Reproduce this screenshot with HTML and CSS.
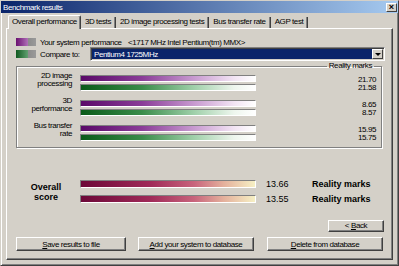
FILE: index.html
```html
<!DOCTYPE html>
<html lang="en">
<head>
  <meta charset="UTF-8">
  <title>Benchmark results</title>
  <link rel="stylesheet" href="styles.css">
</head>
<body>
  <div class="window">
    <div class="titlebar">
      <span>Benchmark results</span>
      <span class="close">&#215;</span>
    </div>

    <div class="content">
      <div class="tabs">
        <div class="tab active">Overall performance</div>
        <div class="tab">3D tests</div>
        <div class="tab">2D image processing tests</div>
        <div class="tab">Bus transfer rate</div>
        <div class="tab">AGP test</div>
      </div>

      <div class="panel">
        <div class="legend">
          <span class="swatch purple"></span>
          <span class="legend-label">Your system performance</span>
          <span>&lt;1717 MHz Intel Pentium(tm) MMX&gt;</span>
        </div>
        <div class="legend compare">
          <span class="swatch green"></span>
          <span class="legend-label short">Compare to:</span>
          <div class="select">
            <span class="select-text">Pentium4 1725MHz</span>
            <span class="select-btn"></span>
          </div>
        </div>

        <fieldset class="group">
          <legend>Reality marks</legend>
          <div class="row">
            <div class="row-label">2D image<br>processing</div>
            <div class="bars">
              <div class="bar purple"></div>
              <div class="bar green"></div>
            </div>
            <div class="values">21.70<br>21.58</div>
          </div>
          <div class="row">
            <div class="row-label">3D<br>performance</div>
            <div class="bars">
              <div class="bar purple"></div>
              <div class="bar green"></div>
            </div>
            <div class="values">8.65<br>8.57</div>
          </div>
          <div class="row">
            <div class="row-label">Bus transfer<br>rate</div>
            <div class="bars">
              <div class="bar purple"></div>
              <div class="bar green"></div>
            </div>
            <div class="values">15.95<br>15.75</div>
          </div>
        </fieldset>

        <div class="overall">
          <div class="overall-label">Overall<br>score</div>
          <div class="overall-bars">
            <div class="bar score"></div>
            <div class="bar score"></div>
          </div>
          <div class="overall-values">
            <div class="score-line"><span class="num">13.66</span><span>Reality marks</span></div>
            <div class="score-line"><span class="num">13.55</span><span>Reality marks</span></div>
          </div>
        </div>

        <div class="back-row">
          <button class="btn back">&lt; <u>B</u>ack</button>
        </div>

        <div class="buttons">
          <button class="btn save"><u>S</u>ave results to file</button>
          <button class="btn add"><u>A</u>dd your system to database</button>
          <button class="btn delete"><u>D</u>elete from database</button>
        </div>
      </div>
    </div>
  </div>
</body>
</html>
```

FILE: styles.css
```css
/* Reset */
* {
  margin: 0;
  padding: 0;
  box-sizing: border-box;
}

body {
  font-family: "Liberation Sans", Arial, sans-serif;
  font-size: 8px;
  letter-spacing: -0.4px;
  color: #000000;
  background-color: #d4d0c8;
}

.window {
  width: 399px;
  height: 266px;
  background-color: #d4d0c8;
  border: 1px solid;
  border-color: #d4d0c8 #404040 #404040 #d4d0c8;
  box-shadow: inset 1px 1px #ffffff, inset -1px -1px #808080;
}

/* Title bar */
.titlebar {
  height: 12px;
  display: flex;
  align-items: center;
  justify-content: space-between;
  padding: 0 1px 0 2px;
  background: linear-gradient(to right, #0a246a, #a6caf0);
  color: #ffffff;
}

.close {
  width: 11px;
  height: 9px;
  background-color: #d4d0c8;
  border: 1px solid;
  border-color: #ffffff #404040 #404040 #ffffff;
  color: #000000;
  font-size: 9px;
  font-weight: bold;
  line-height: 6px;
  text-align: center;
  letter-spacing: 0;
}

.content {
  padding: 2px 5px 0 5px;
}

/* Tabs */
.tabs {
  display: flex;
  align-items: flex-end;
  height: 13px;
  margin-left: 2px;
  position: relative;
  z-index: 1;
}

.tab {
  height: 11px;
  line-height: 10px;
  padding: 0 4px;
  border-right: 1px solid #404040;
  box-shadow: inset -1px 0 #808080;
  white-space: nowrap;
}

.tab.active {
  height: 14px;
  line-height: 12px;
  margin-bottom: -1px;
  padding: 0 3px;
  background-color: #d4d0c8;
  border-top: 1px solid #ffffff;
  border-left: 1px solid #ffffff;
  border-radius: 2px 2px 0 0;
}

/* Tab page */
.panel {
  height: 232px;
  padding: 8px 8px 0 9px;
  border: 1px solid;
  border-color: #ffffff #404040 #404040 #ffffff;
  box-shadow: inset -1px -1px #808080;
}

.legend {
  display: flex;
  align-items: center;
  height: 10px;
}

.legend.compare {
  height: 14px;
}

.swatch {
  width: 20px;
  height: 8px;
  margin-right: 4px;
  flex-shrink: 0;
}

.swatch.purple {
  background: linear-gradient(to right, #6a1070, #b070b8 60%, #8c8c8c 62%, #9a9a9a);
}

.swatch.green {
  background: linear-gradient(to right, #105a20, #60a070 60%, #8c8c8c 62%, #9a9a9a);
}

.legend-label {
  width: 88px;
  flex-shrink: 0;
}

.legend-label.short {
  width: 50px;
}

.select {
  flex: 1;
  height: 14px;
  margin-right: -1px;
  display: flex;
  align-items: center;
  justify-content: space-between;
  padding: 0 1px 0 3px;
  background-color: #0a246a;
  color: #ffffff;
  border: 1px solid;
  border-color: #808080 #ffffff #ffffff #808080;
  box-shadow: inset 1px 1px #404040, inset -1px -1px #d4d0c8;
}

.select-btn {
  width: 11px;
  height: 10px;
  background-color: #d4d0c8;
  border: 1px solid;
  border-color: #ffffff #404040 #404040 #ffffff;
  position: relative;
}

.select-btn::after {
  content: "";
  position: absolute;
  left: 2px;
  top: 3px;
  border-left: 3px solid transparent;
  border-right: 3px solid transparent;
  border-top: 3px solid #000000;
}

/* Reality marks group */
.group {
  margin-right: 2px;
  padding: 1px 5px 0 0;
  min-inline-size: 0;
  border: 1px solid #808080;
  box-shadow: 1px 1px #ffffff, inset 1px 1px #ffffff;
}

.group legend {
  margin-left: auto;
  margin-right: 2px;
  padding: 0 2px;
  line-height: 10px;
}

.row {
  display: flex;
  height: 25px;
}

.row-label {
  width: 55px;
  line-height: 8px;
  text-align: right;
  flex-shrink: 0;
}

.bars {
  width: 176px;
  margin-left: 8px;
  padding-top: 3px;
  display: flex;
  flex-direction: column;
  gap: 2px;
}

.bar {
  height: 7px;
  border: 1px solid;
  border-color: #808080 #ffffff #ffffff #808080;
}

.bar.purple {
  background: linear-gradient(to right, #5a0a68, #8a3c98 35%, #c89ad0 65%, #f2e4f4 88%, #ffffff);
}

.bar.green {
  background: linear-gradient(to right, #0a5a18, #3a8c4a 35%, #a0d0aa 65%, #eef6ee 88%, #ffffff);
}

.values {
  flex: 1;
  padding-top: 4px;
  line-height: 8px;
  text-align: right;
}

/* Overall score */
.overall {
  display: flex;
  margin-top: 32px;
}

.overall-label {
  width: 60px;
  padding-top: 2px;
  font-size: 9px;
  font-weight: bold;
  line-height: 10px;
  letter-spacing: 0;
  text-align: center;
}

.overall-bars {
  width: 176px;
  margin-left: 4px;
  display: flex;
  flex-direction: column;
  gap: 7px;
}

.bar.score {
  height: 8px;
  background: linear-gradient(to right, #6c0838, #a02a58 40%, #c8647c 65%, #e4b09c 82%, #f6f0c4);
}

.overall-values {
  margin-left: 10px;
  display: flex;
  flex-direction: column;
  gap: 7px;
  font-size: 9px;
  font-weight: bold;
  letter-spacing: 0;
}

.score-line {
  display: flex;
  line-height: 8px;
}

.score-line .num {
  width: 46px;
  font-weight: normal;
}

/* Buttons */
.btn {
  font-family: "Liberation Sans", Arial, sans-serif;
  font-size: 8px;
  letter-spacing: -0.4px;
  color: #000000;
  background-color: #d4d0c8;
  border: 1px solid;
  border-color: #ffffff #404040 #404040 #ffffff;
  box-shadow: inset -1px -1px #808080;
  height: 14px;
}

.back-row {
  display: flex;
  justify-content: flex-end;
  margin-top: 17px;
}

.btn.back {
  width: 56px;
  height: 12px;
  line-height: 8px;
}

.buttons {
  display: flex;
  margin-top: 5px;
}

.btn.save {
  width: 110px;
  margin-right: 12px;
}

.btn.add {
  width: 116px;
  margin-right: 13px;
}

.btn.delete {
  width: 116px;
}
```
